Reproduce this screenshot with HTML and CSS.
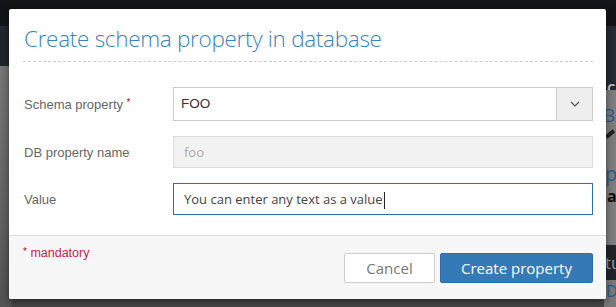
FILE: index.html
```html
<!DOCTYPE html>
<html>
<head>
<meta charset="utf-8">
<link rel="stylesheet" href="styles.css">
</head>
<body>
<div class="page">
  <div class="topbar"></div>
  <div class="page-main">
    <div class="left-col"></div>
    <div class="center-col"></div>
    <div class="right-col">
      <div class="rc-dark"><span class="frag-c">C</span></div>
      <div class="rc-light">
        <span class="frag-ba">BA</span>
        <span class="frag-pen"></span>
        <span class="frag-p">p</span>
        <span class="frag-a">a</span>
      </div>
      <div class="rc-band">tu</div>
      <div class="rc-light2"><span class="frag-d">D</span></div>
    </div>
  </div>
</div>

<div class="modal">
  <div class="modal-header">
    <h3 class="modal-title">Create schema property in database</h3>
  </div>
  <div class="modal-body">
    <div class="form-row">
      <label class="form-label">Schema property <sup class="req">*</sup></label>
      <div class="select">
        <span class="select-value">FOO</span>
        <span class="select-btn">
          <svg width="10" height="6" viewBox="0 0 10 6"><path d="M1 1 L5 5 L9 1" fill="none" stroke="#555" stroke-width="1.2"/></svg>
        </span>
      </div>
    </div>
    <div class="form-row">
      <label class="form-label">DB property name</label>
      <div class="input input-disabled">foo</div>
    </div>
    <div class="form-row">
      <label class="form-label">Value</label>
      <div class="input input-focus">You can enter any text as a value<span class="caret"></span></div>
    </div>
  </div>
  <div class="modal-footer">
    <div class="mandatory"><sup class="req">*</sup> mandatory</div>
    <div class="buttons">
      <button class="btn btn-default">Cancel</button>
      <button class="btn btn-primary">Create property</button>
    </div>
  </div>
</div>
</body>
</html>
```
FILE: styles.css
```css
html, body {
  margin: 0;
  padding: 0;
}
body {
  width: 616px;
  height: 307px;
  overflow: hidden;
  position: relative;
  background: #4d4d4d;
  font-family: "Liberation Sans", Arial, sans-serif;
}
.page {
  width: 616px;
  height: 307px;
  display: flex;
  flex-direction: column;
}
.topbar {
  height: 26px;
  background: #121418;
  flex: none;
}
.page-main {
  flex: 1;
  display: flex;
}
.left-col {
  width: 12px;
  background: linear-gradient(to bottom, #22262e 0, #22262e 40px, #787878 40px, #6a6a6a 140px, #545454 280px);
}
.center-col {
  flex: 1;
  background: #4a4a4a;
}
.right-col {
  width: 12px;
  display: flex;
  flex-direction: column;
  overflow: hidden;
  font-family: "Open Sans", sans-serif;
  font-size: 20px;
  line-height: 1;
}
.rc-dark {
  height: 64px;
  flex: none;
  background: #262a33;
  box-sizing: border-box;
  padding: 50px 0 0 3px;
}
.frag-c {
  color: #c8c8c8;
  font-size: 13px;
  font-weight: 700;
}
.rc-light {
  height: 155px;
  flex: none;
  background: #7f7f7f;
  display: flex;
  flex-direction: column;
  padding-left: 1px;
  padding-top: 16px;
  box-sizing: border-box;
}
.frag-ba { color: #2c5d8a; height: 26px; margin-left: -2px; font-size: 19px; }
.frag-pen { width: 10px; height: 4px; background: #222; transform: rotate(-40deg); margin: 0; }
.frag-p { color: #2c5d8a; margin-top: 28px; height: 24px; }
.frag-a { color: #111; font-size: 16px; font-weight: 700; margin-left: 2px; }
.rc-band {
  height: 35px;
  flex: none;
  background: #22252b;
  color: #999;
  font-size: 17px;
  line-height: 35px;
  padding-left: 1px;
}
.rc-light2 {
  flex: 1;
  background: #7a7a7a;
}
.frag-d { color: #2c5d8a; font-size: 16px; margin-left: 2px; }

.modal {
  position: absolute;
  left: 9px;
  top: 9px;
  width: 597px;
  height: 290px;
  background: #fff;
  border-radius: 2px;
  box-shadow: 0 3px 9px rgba(0,0,0,0.5);
  display: flex;
  flex-direction: column;
  overflow: hidden;
}
.modal-header {
  padding: 0 13px 0 14px;
  height: 58px;
  flex: none;
}
.modal-title {
  margin: 0;
  font-family: "Open Sans", sans-serif;
  font-weight: 300;
  font-size: 22.5px;
  line-height: 28px;
  color: #3584c1;
  padding: 16px 0 8px 1px;
  border-bottom: 1px dashed #cfcfcf;
  letter-spacing: -0.3px;
}
.modal-body {
  padding: 20px 13px 20px 15px;
  display: flex;
  flex-direction: column;
  gap: 15px;
}
.form-row {
  display: flex;
  align-items: center;
}
.form-label {
  width: 149px;
  font-size: 13px;
  color: #666;
}
.req {
  color: #b0102f;
  font-size: 10px;
  vertical-align: top;
  position: relative;
  top: 0;
}
.select {
  flex: 1;
  height: 34px;
  box-sizing: border-box;
  border: 1px solid #ccc;
  display: flex;
  align-items: stretch;
}
.select-value {
  flex: 1;
  padding-left: 7px;
  font-size: 13.5px;
  color: #333;
  line-height: 32px;
}
.select-btn {
  width: 35px;
  background: #eee;
  border-left: 1px solid #ccc;
  display: flex;
  align-items: center;
  justify-content: center;
}
.input {
  flex: 1;
  height: 32px;
  box-sizing: border-box;
  border: 1px solid #ddd;
  font-family: "Open Sans", sans-serif;
  font-size: 13px;
  line-height: 30px;
  padding-left: 10px;
  color: #444;
}
.input-disabled {
  background: #f2f2f2;
  color: #aaa;
}
.input-focus {
  border-color: #2f6fa8;
}
.caret {
  display: inline-block;
  width: 1px;
  height: 17px;
  background: #222;
  vertical-align: middle;
  margin-left: 1px;
}
.modal-footer {
  flex: 1;
  background: #f7f7f7;
  border-top: 1px solid #ddd;
  display: flex;
  justify-content: space-between;
  padding: 7px 13px 0 14px;
}
.mandatory {
  font-size: 12.5px;
  color: #c0284a;
  padding-top: 3px;
}
.mandatory .req {
  font-size: 10px;
}
.buttons {
  display: flex;
  gap: 5px;
  padding-top: 10px;
}
.btn {
  height: 30px;
  box-sizing: border-box;
  border-radius: 2px;
  font-family: "Open Sans", sans-serif;
  font-size: 15px;
  padding: 0;
  margin: 0;
  cursor: pointer;
}
.btn-default {
  width: 91px;
  background: #fff;
  border: 1px solid #ccc;
  color: #777;
}
.btn-primary {
  width: 153px;
  background: #337ab7;
  border: 1px solid #2e6da4;
  color: #fff;
}
```
